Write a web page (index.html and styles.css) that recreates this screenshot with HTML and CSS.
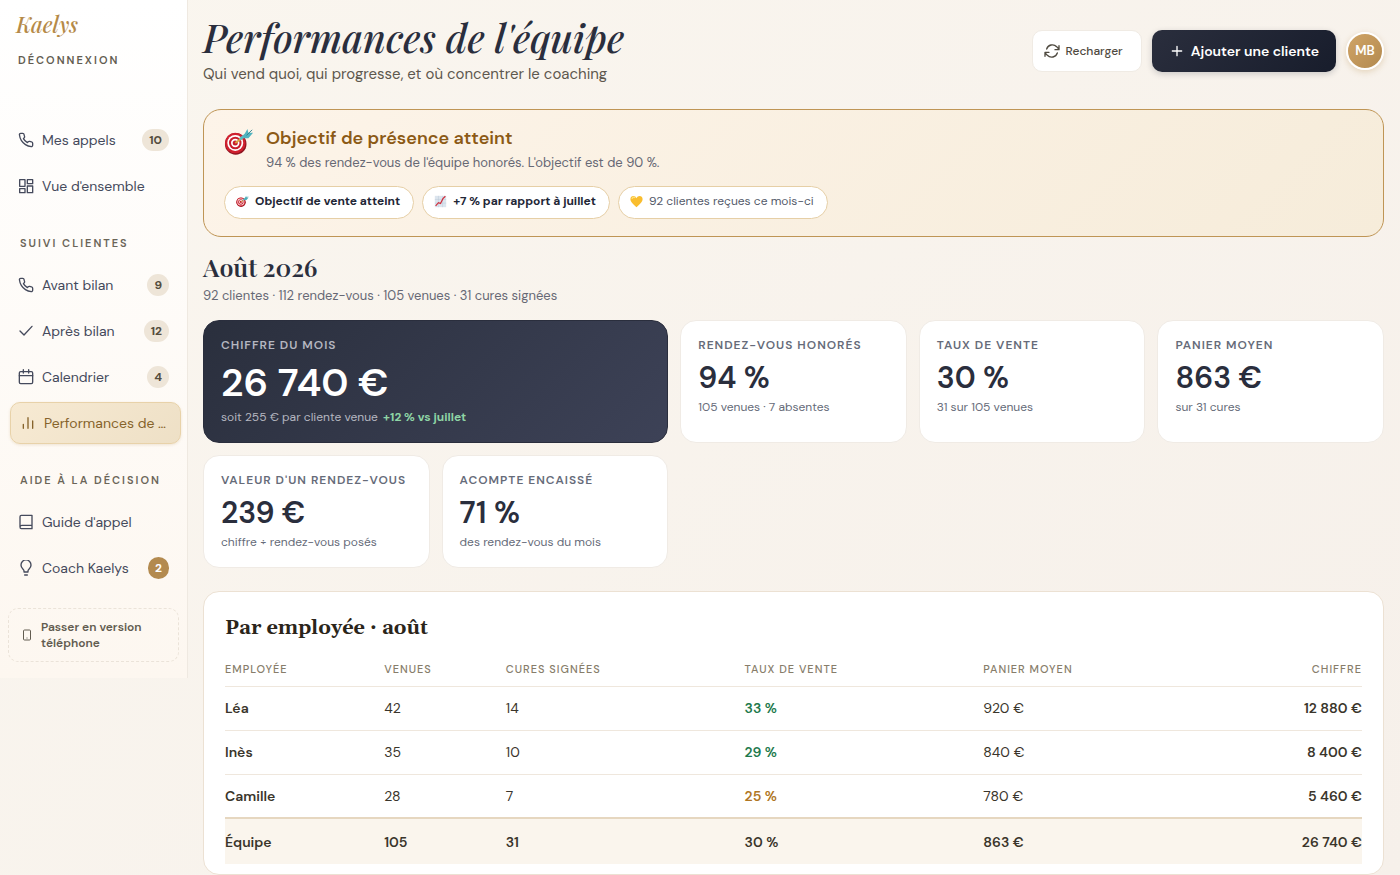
FILE: index.html
```html
<!DOCTYPE html>
<html lang="fr">
<head>
  <meta charset="UTF-8" />
  <meta name="viewport" content="width=device-width, initial-scale=1.0" />
  <title>Kaelys - Performances de l'équipe</title>
  <link rel="stylesheet" href="styles.css">
</head>
<body>
  <svg class="sprite" aria-hidden="true">
    <symbol id="phone" viewBox="0 0 24 24"><path d="M22 16.92v3a2 2 0 0 1-2.18 2 19.8 19.8 0 0 1-8.63-3.07 19.5 19.5 0 0 1-6-6A19.8 19.8 0 0 1 2.12 4.18 2 2 0 0 1 4.11 2h3a2 2 0 0 1 2 1.72c.13.96.36 1.9.7 2.81a2 2 0 0 1-.45 2.11L8.09 9.91a16 16 0 0 0 6 6l1.27-1.27a2 2 0 0 1 2.11-.45c.91.34 1.85.57 2.81.7A2 2 0 0 1 22 16.92z"/></symbol>
    <symbol id="target" viewBox="0 0 32 32">
      <circle cx="12.500" cy="18" r="11.500" fill="#8f1420"/>
      <circle cx="12" cy="17" r="11" fill="#d0202e"/>
      <circle cx="12" cy="17" r="8.500" fill="#fff"/>
      <circle cx="12" cy="17" r="6.700" fill="#c81e2c"/>
      <circle cx="12" cy="17" r="4.500" fill="#fff"/>
      <circle cx="12" cy="17" r="2.700" fill="#c81e2c"/>
      <path d="M12 17L19 12" stroke="#d9a441" stroke-width="2"/>
      <path d="M17 13L25 7" stroke="#55b9c2" stroke-width="3"/>
      <path d="M21 9l4-7 1 4 5 0-5 6-5 0z" fill="#4fb3bf"/>
      <path d="M24 9l6-6" stroke="#2c7f8c" stroke-width="1"/>
    </symbol>
  </svg>

  <div class="layout">
    <aside class="sidebar">
      <div class="logo">Kaelys</div>
      <button class="logout">Déconnexion</button>

      <nav class="nav">
        <a href="#" class="nav-item"><svg class="icon"><use href="#phone"/></svg><span>Mes appels</span><b class="badge">10</b></a>
        <a href="#" class="nav-item">
          <svg class="icon" viewBox="0 0 24 24"><rect x="2.500" y="2.500" width="8" height="10"/><rect x="14" y="2.500" width="8" height="6"/><rect x="14" y="12" width="8" height="10"/><rect x="2.500" y="16" width="8" height="6"/></svg>
          <span>Vue d'ensemble</span>
        </a>

        <h3>Suivi clientes</h3>
        <a href="#" class="nav-item"><svg class="icon"><use href="#phone"/></svg><span>Avant bilan</span><b class="badge">9</b></a>
        <a href="#" class="nav-item">
          <svg class="icon" viewBox="0 0 24 24"><path d="M21 5L9 18l-6-6"/></svg>
          <span>Après bilan</span><b class="badge">12</b>
        </a>
        <a href="#" class="nav-item">
          <svg class="icon" viewBox="0 0 24 24"><rect x="2" y="4" width="20" height="18" rx="2"/><path d="M2 10h20M8 1v5M16 1v5"/></svg>
          <span>Calendrier</span><b class="badge">4</b>
        </a>
        <a href="#" class="nav-item active">
          <svg class="icon" viewBox="0 0 24 24"><path d="M5 20v-6M12 20V4M19 20V9"/></svg>
          <span>Performances de …</span>
        </a>

        <h3>Aide à la décision</h3>
        <a href="#" class="nav-item">
          <svg class="icon" viewBox="0 0 24 24"><path d="M3 20V4a2 2 0 0 1 2-2h16v20H5a2 2 0 0 1-2-2zM3 20a3 3 0 0 1 3-3h15"/></svg>
          <span>Guide d'appel</span>
        </a>
        <a href="#" class="nav-item">
          <svg class="icon" viewBox="0 0 24 24"><path d="M9 18v-2c0-1-1-2-2-3a7.500 7.500 0 1 1 10 0c-1 1-2 2-2 3v2zM10 22.500h4"/></svg>
          <span>Coach Kaelys</span><b class="badge badge-gold">2</b>
        </a>
      </nav>

      <button class="phone-version">
        <svg viewBox="0 0 24 24"><rect x="5" y="2" width="14" height="20" rx="2"/><path d="M11 18h2"/></svg>
        <span>Passer en version téléphone</span>
      </button>
    </aside>

    <main class="main">
      <header class="header">
        <div>
          <h1>Performances de l'équipe</h1>
          <p>Qui vend quoi, qui progresse, et où concentrer le coaching</p>
        </div>
        <div class="header-buttons">
          <button class="btn">
            <svg class="icon" viewBox="0 0 24 24"><path d="M22.500 4v6h-6M1.500 20v-6h6M4 9a9 9 0 0 1 15-3.500l3.500 4M1.500 14.500l3.500 4A9 9 0 0 0 20 15"/></svg>
            Recharger
          </button>
          <button class="btn btn-dark">
            <svg class="icon" viewBox="0 0 24 24"><path d="M12 5v14M5 12h14"/></svg>
            Ajouter une cliente
          </button>
          <button class="avatar">MB</button>
        </div>
      </header>

      <section class="banner">
        <div class="banner-top">
          <svg class="banner-icon"><use href="#target"/></svg>
          <div>
            <h2>Objectif de présence atteint</h2>
            <p>94 % des rendez-vous de l'équipe honorés. L'objectif est de 90 %.</p>
          </div>
        </div>
        <div class="chips">
          <span class="chip strong"><svg><use href="#target"/></svg>Objectif de vente atteint</span>
          <span class="chip strong">
            <svg viewBox="0 0 32 32"><rect x="2" y="2" width="28" height="28" fill="#dce5ee"/><path d="M2 11h28M2 20h28M11 2v28M21 2v28" stroke="#b6c6d6"/><path d="M4 27l7-8 5 2 6-12 6-6" fill="none" stroke="#cf2f3c" stroke-width="3"/></svg>
            +7 % par rapport à juillet
          </span>
          <span class="chip">
            <svg viewBox="0 0 32 32"><path d="M16 30C9 24 1 18 1 10c0-9 12-10 15-2 3-8 15-7 15 2 0 8-8 14-15 20z" fill="#f9bd2e"/><path d="M5 10c0-4 5-6 8-3" fill="none" stroke="#ffe27a" stroke-width="3"/></svg>
            92 clientes reçues ce mois-ci
          </span>
        </div>
      </section>

      <h2 class="month">Août 2026</h2>
      <p class="month-info">92 clientes · 112 rendez-vous · 105 venues · 31 cures signées</p>

      <section class="stats">
        <div class="stat stat-main">
          <h4>Chiffre du mois</h4>
          <strong>26 740 €</strong>
          <p>soit 255 € par cliente venue <b>+12 % vs juillet</b></p>
        </div>
        <div class="stat">
          <h4>Rendez-vous honorés</h4>
          <strong>94 %</strong>
          <p>105 venues · 7 absentes</p>
        </div>
        <div class="stat">
          <h4>Taux de vente</h4>
          <strong>30 %</strong>
          <p>31 sur 105 venues</p>
        </div>
        <div class="stat">
          <h4>Panier moyen</h4>
          <strong>863 €</strong>
          <p>sur 31 cures</p>
        </div>
        <div class="stat">
          <h4>Valeur d'un rendez-vous</h4>
          <strong>239 €</strong>
          <p>chiffre ÷ rendez-vous posés</p>
        </div>
        <div class="stat">
          <h4>Acompte encaissé</h4>
          <strong>71 %</strong>
          <p>des rendez-vous du mois</p>
        </div>
      </section>

      <section class="card">
        <h2>Par employée · août</h2>
        <table>
          <colgroup>
            <col class="col-name"><col class="col-visits"><col class="col-wide"><col class="col-wide"><col>
          </colgroup>
          <thead>
            <tr><th>Employée</th><th>Venues</th><th>Cures signées</th><th>Taux de vente</th><th>Panier moyen</th><th>Chiffre</th></tr>
          </thead>
          <tbody>
            <tr><td>Léa</td><td>42</td><td>14</td><td class="good">33 %</td><td>920 €</td><td>12 880 €</td></tr>
            <tr><td>Inès</td><td>35</td><td>10</td><td class="good">29 %</td><td>840 €</td><td>8 400 €</td></tr>
            <tr><td>Camille</td><td>28</td><td>7</td><td class="medium">25 %</td><td>780 €</td><td>5 460 €</td></tr>
          </tbody>
          <tfoot>
            <tr><td>Équipe</td><td>105</td><td>31</td><td>30 %</td><td>863 €</td><td>26 740 €</td></tr>
          </tfoot>
        </table>
      </section>
    </main>
  </div>
</body>
</html>
```
FILE: styles.css
```css
* {
  box-sizing: border-box;
}

body {
  margin: 0;
  min-height: 100vh;
  font-family: "DM Sans", Inter, sans-serif;
  font-size: 14px;
  color: #2a2e3d;
  background: linear-gradient(135deg, #faf6ef, #f6f0ea);
}

h1, h2, h3, h4, p {
  margin: 0;
}

button {
  font-family: inherit;
  cursor: pointer;
}

.sprite {
  display: none;
}

.icon {
  width: 16px;
  height: 16px;
  flex-shrink: 0;
  fill: none;
  stroke: currentColor;
  stroke-width: 2;
  stroke-linecap: round;
  stroke-linejoin: round;
}

.layout {
  display: grid;
  grid-template-columns: 188px minmax(0, 1fr);
  align-items: start;
}

/* Menu */

.sidebar {
  padding: 8px 8px 16px;
  border-right: 1px solid #efe9e1;
  background: linear-gradient(#fff, #fdf7f0);
}

.logo {
  padding-left: 8px;
  font: italic 500 22px/32px "Playfair Display", "Liberation Serif", serif;
  color: #b58a48;
}

.logout {
  display: block;
  padding: 0 10px;
  border: none;
  background: none;
  font-size: 11px;
  line-height: 40px;
  font-weight: 600;
  letter-spacing: 2px;
  text-transform: uppercase;
  color: #625c50;
}

.nav {
  display: flex;
  flex-direction: column;
  gap: 4px;
  margin-top: 39px;
}

.nav h3 {
  padding: 26px 12px 11px;
  font-size: 11px;
  line-height: 12px;
  font-weight: 600;
  letter-spacing: 2px;
  text-transform: uppercase;
  white-space: nowrap;
  color: #6b6558;
}

.nav-item {
  display: flex;
  align-items: center;
  gap: 8px;
  height: 42px;
  padding: 0 10px;
  color: #454a5c;
  font-weight: 400;
  text-decoration: none;
  white-space: nowrap;
}

.nav-item.active {
  margin: 0 -2px 0 2px;
  padding: 0 9px;
  border: 1px solid #e8d2a9;
  border-radius: 10px;
  background: linear-gradient(135deg, #f7ead3, #eee0c6);
  box-shadow: 0 1px 3px rgba(181, 138, 72, 0.2);
  color: #86632b;
}

.badge {
  min-width: 21px;
  margin-left: auto;
  padding: 0 7px;
  border-radius: 11px;
  background-color: #eee5d8;
  font-size: 12px;
  line-height: 22px;
  font-weight: 700;
  text-align: center;
  color: #544c3d;
}

.badge-gold {
  background-color: #b38a4f;
  color: white;
}

.phone-version {
  display: flex;
  align-items: center;
  gap: 8px;
  width: 100%;
  margin-top: 19px;
  padding: 10px 12px;
  border: 1px dashed #ebe3d9;
  border-radius: 10px;
  background: none;
  font-size: 12px;
  line-height: 16px;
  font-weight: 600;
  text-align: left;
  color: #625c50;
}

.phone-version svg {
  width: 12px;
  height: 12px;
  flex-shrink: 0;
  fill: none;
  stroke: currentColor;
  stroke-width: 2;
}

/* Contenu */

.main {
  padding: 12px 16px 0 15px;
}

.header {
  display: flex;
  align-items: center;
  justify-content: space-between;
}

.header h1 {
  font: italic 500 39px/50px "Playfair Display", "Liberation Serif", serif;
}

.header p {
  margin-top: 2px;
  font-size: 15px;
  line-height: 20px;
  color: #5e584e;
}

.header-buttons {
  display: flex;
  align-items: center;
  gap: 10px;
  margin-top: 5px;
}

.btn {
  display: flex;
  align-items: center;
  gap: 6px;
  height: 42px;
  padding: 0 18px 0 11px;
  border: 1px solid #f0ebe4;
  border-radius: 10px;
  background-color: white;
  font-size: 12px;
  font-weight: 500;
  color: #4f4a40;
}

.btn-dark {
  padding: 0 17px;
  border: none;
  background: linear-gradient(135deg, #2a2e3d, #181d2c);
  box-shadow: 0 2px 6px rgba(24, 29, 44, 0.2);
  font-size: 14px;
  font-weight: 600;
  color: white;
}

.avatar {
  width: 38px;
  height: 38px;
  padding: 0;
  border: 2px solid white;
  border-radius: 50%;
  background: linear-gradient(135deg, #d0a467, #b38a4f);
  box-shadow: 0 2px 6px rgba(181, 138, 72, 0.3);
  font-size: 13px;
  font-weight: 600;
  color: white;
}

.banner {
  margin-top: 25px;
  padding: 17px 20px;
  border: 1px solid #bf9555;
  border-radius: 18px;
  background: linear-gradient(135deg, #fdf4e9, #f6ecda);
}

.banner-top {
  display: flex;
  gap: 12px;
}

.banner-icon {
  width: 30px;
  height: 30px;
}

.banner h2 {
  font-size: 18px;
  line-height: 22px;
  font-weight: 600;
  color: #8c5a16;
}

.banner p {
  margin-top: 4px;
  font-size: 13px;
  line-height: 20px;
  color: #666874;
}

.chips {
  display: flex;
  flex-wrap: wrap;
  gap: 8px;
  margin-top: 13px;
}

.chip {
  display: flex;
  align-items: center;
  gap: 6px;
  height: 33px;
  padding: 0 13px 3px 11px;
  border: 1px solid #e6cfa6;
  border-radius: 17px;
  background-color: white;
  font-size: 12px;
  color: #555b6b;
}

.chip.strong {
  font-weight: 700;
  color: #222636;
}

.chip svg {
  width: 13px;
  height: 13px;
}

.month {
  margin-top: 11px;
  font: 600 25px/38px "Playfair Display", "Liberation Serif", serif;
}

.month-info {
  font-size: 13px;
  line-height: 20px;
  color: #666874;
}

.stats {
  display: grid;
  grid-template-columns: repeat(5, minmax(0, 1fr));
  gap: 12px;
  margin-top: 14px;
}

.stat {
  padding: 16px 17px 18px;
  border: 1px solid #f0ebe5;
  border-radius: 16px;
  background-color: white;
  color: #666b79;
}

.stat h4 {
  font-size: 12px;
  line-height: 16px;
  font-weight: 600;
  letter-spacing: 1px;
  text-transform: uppercase;
  white-space: nowrap;
}

.stat strong {
  display: block;
  margin: 6px 0 3px;
  font-size: 30px;
  line-height: 38px;
  font-weight: 600;
  color: #2a2e3d;
}

.stat p {
  font-size: 12px;
  line-height: 14px;
}

.stat-main {
  grid-column: span 2;
  border-color: #2a2e3d;
  background: linear-gradient(135deg, #2a2f3d, #3d4257);
  color: #b5b7c0;
}

.stat-main strong {
  font-size: 39px;
  line-height: 48px;
  color: white;
}

.stat-main b {
  margin-left: 2px;
  font-weight: 700;
  color: #8ed4a5;
}

.card {
  margin-top: 23px;
  padding: 21px 21px 10px;
  border: 1px solid #ece1d3;
  border-radius: 16px;
  background-color: white;
}

.card h2 {
  font: bold 20px/30px Gelasio, "Liberation Serif", serif;
  color: #2b251a;
}

table {
  width: 100%;
  border-collapse: collapse;
  table-layout: fixed;
  color: #3a352b;
}

.col-name {
  width: 14%;
}

.col-visits {
  width: 10.7%;
}

.col-wide {
  width: 21%;
}

th {
  height: 43px;
  padding: 9px 0 0;
  font-size: 11px;
  font-weight: 500;
  letter-spacing: 1px;
  text-align: left;
  text-transform: uppercase;
  color: #877d6a;
}

td {
  height: 44px;
  padding: 0;
  border-top: 1px solid #efe7dd;
}

th:last-child,
td:last-child {
  text-align: right;
}

td:first-child,
td:last-child,
tfoot td {
  font-weight: 600;
}

td.good {
  font-weight: 600;
  color: #1e7a4d;
}

td.medium {
  font-weight: 600;
  color: #b07623;
}

tfoot td {
  height: 46px;
  border-top: 2px solid #e6d7c0;
  background-color: #faf5ed;
}
```
